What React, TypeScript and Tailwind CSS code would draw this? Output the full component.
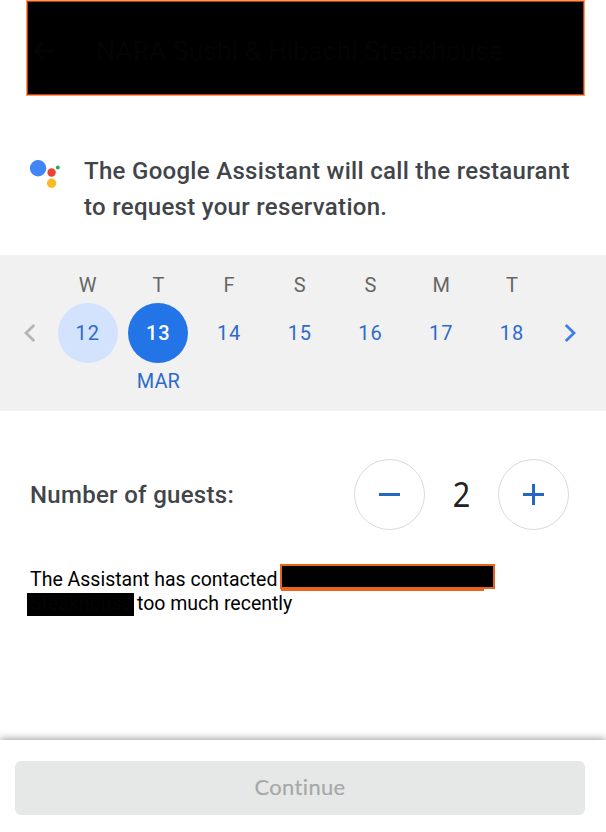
const days = [
  { label: 'W', date: 12 },
  { label: 'T', date: 13 },
  { label: 'F', date: 14 },
  { label: 'S', date: 15 },
  { label: 'S', date: 16 },
  { label: 'M', date: 17 },
  { label: 'T', date: 18 },
];

const today = 12;
const selected = 13;

function AssistantLogo() {
  return (
    <svg className="ml-[30px] mt-[7px] h-[30px] w-[30px] shrink-0" viewBox="0 0 30 30">
      <circle cx="8.1" cy="8.2" r="8.2" fill="#4285f4" />
      <circle cx="21.6" cy="12.5" r="4.2" fill="#ea4335" />
      <circle cx="21.6" cy="23.2" r="4.7" fill="#fbbc23" />
      <circle cx="27.8" cy="7.5" r="2" fill="#34a853" />
    </svg>
  );
}

function Header() {
  return (
    <header className="ml-[26px] h-24 w-[559px] border border-[#ff9a5a] bg-black">
      <div className="flex h-full items-center border border-[#b8430a] pl-1 pt-1.5">
        <svg className="h-6 w-6" viewBox="0 0 24 24" fill="none" stroke="#040404" strokeWidth="3">
          <path d="M22 12H3M11 4l-8 8 8 8" />
        </svg>
        <h1 className="ml-[40px] whitespace-nowrap text-[26.6px] text-[#040404]">
          NARA Sushi &amp; Hibachi Steakhouse
        </h1>
      </div>
    </header>
  );
}

function DatePicker() {
  return (
    <section className="mt-[30px] flex h-[156px] bg-[#f1f1f1]">
      <button className="flex w-[52.3px] justify-center pt-[68px]">
        <svg className="ml-[7px] h-5 w-3" viewBox="0 0 12 20" fill="none" stroke="#b5b5b5" strokeWidth="2.8">
          <path d="M10.200 1.900L2 10l8.200 8.100" />
        </svg>
      </button>
      <div className="grid w-[495px] grid-cols-7 text-center text-xl">
        {days.map((day) => (
          <div key={day.date} className="flex flex-col items-center pt-4">
            <span className="h-8 leading-[29px] text-[#666666]">{day.label}</span>
            {day.date === selected ? (
              <span className="flex h-[60px] w-[60px] items-center justify-center rounded-full bg-[#2374e6] font-medium tracking-[0.9px] text-white">
                {day.date}
              </span>
            ) : day.date === today ? (
              <span className="flex h-[60px] w-[60px] items-center justify-center rounded-full bg-[#d3e3fd] tracking-[0.9px] text-[#2d6bcb]">
                {day.date}
              </span>
            ) : (
              <span className="flex h-[60px] w-[60px] items-center justify-center tracking-[0.9px] text-[#2d6bcb]">
                {day.date}
              </span>
            )}
            {day.date === selected && <span className="mt-1 leading-[29px] text-[#2d6bcb]">MAR</span>}
          </div>
        ))}
      </div>
      <button className="flex w-[58px] justify-center pt-[68px]">
        <svg className="mr-[13px] h-5 w-3" viewBox="0 0 12 20" fill="none" stroke="#3f80e8" strokeWidth="2.8">
          <path d="M1.800 1.900L10 10l-8.200 8.100" />
        </svg>
      </button>
    </section>
  );
}

function GuestCounter() {
  return (
    <section className="flex h-[71px] items-center pl-[30px] pr-[37px]">
      <h2 className="text-2xl font-medium tracking-[0.3px] text-[#414549]">Number of guests:</h2>
      <button className="ml-auto flex h-[71px] w-[71px] items-center justify-center rounded-full border border-[#dadada]">
        <svg className="h-[21px] w-[21px]" viewBox="0 0 21 21" stroke="#2466c4" strokeWidth="3">
          <path d="M0 10.500h21" />
        </svg>
      </button>
      <span className="w-[73px] scale-x-90 pb-px text-center font-['Noto_Sans'] text-[34px] leading-none text-[#202124]">
        2
      </span>
      <button className="flex h-[71px] w-[71px] items-center justify-center rounded-full border border-[#dadada]">
        <svg className="h-[21px] w-[21px]" viewBox="0 0 21 21" stroke="#2466c4" strokeWidth="3">
          <path d="M0 10.500h21M10.500 0v21" />
        </svg>
      </button>
    </section>
  );
}

export default function App() {
  return (
    <main className="flex h-[832px] w-[606px] flex-col overflow-hidden bg-white font-['Roboto',sans-serif]">
      <Header />

      <section className="mt-[57px] flex h-[72px]">
        <AssistantLogo />
        <p className="ml-6 whitespace-nowrap text-2xl font-medium leading-9 tracking-[0.3px] text-[#414549]">
          The Google Assistant will call the restaurant
          <br />
          to request your reservation.
        </p>
      </section>

      <DatePicker />

      <div className="mt-12">
        <GuestCounter />
      </div>

      {/* Notice with the restaurant name blanked out */}
      <section className="mt-[34px] text-[19.5px] text-black">
        <div className="flex h-[26px] pl-[30px]">
          <span className="w-[250px] whitespace-nowrap leading-[31px]">The Assistant has contacted</span>
          <span className="h-[25px] w-[215px] border-2 border-[#e8631c] bg-black" />
        </div>
        <div className="-mt-px flex h-6 pl-[27px]">
          <span className="mt-1 h-[23px] w-[107px] bg-black pl-[3px] leading-[21px] text-[#040404]">Steakhouse</span>
          <span className="ml-[3px] whitespace-nowrap leading-[29px]">too much recently</span>
          <span className="-ml-[11px] h-0.5 w-[203px] bg-[#f26419]" />
        </div>
      </section>

      <footer className="mt-auto h-[92px] bg-white px-[15px] pt-[21px] shadow-[0_-1px_8px_0px_rgba(0,0,0,0.4)]">
        <button className="h-[54px] w-[570px] rounded-md bg-[#e6e8e7] pb-[3px] font-['Lato'] text-[22px] tracking-[0.35px] text-[#a6a8a7] [-webkit-text-stroke:0.2px_#a6a8a7] [font-variant-ligatures:none]">
          Continue
        </button>
      </footer>
    </main>
  );
}
